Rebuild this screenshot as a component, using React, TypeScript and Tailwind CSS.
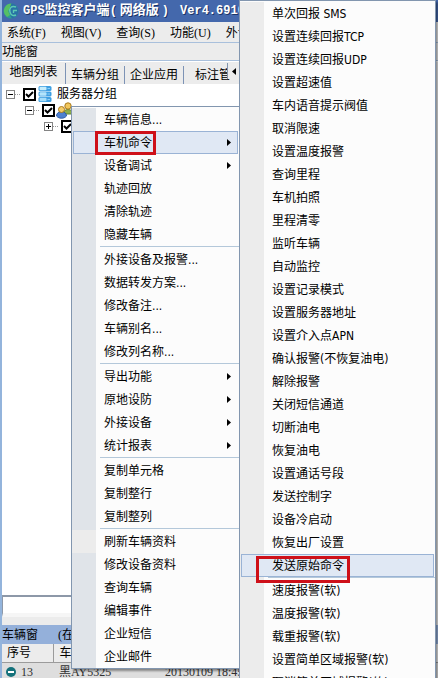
import { useState } from 'react';

type MenuEntry = {
  label: string;
  arrow?: boolean;
  active?: boolean;
  marked?: boolean;
  plain?: boolean;
};

const vehicleGroups: MenuEntry[][] = [
  [
    { label: '车辆信息...' },
    { label: '车机命令', arrow: true, active: true, marked: true },
    { label: '设备调试', arrow: true },
    { label: '轨迹回放' },
    { label: '清除轨迹' },
    { label: '隐藏车辆' },
  ],
  [
    { label: '外接设备及报警...' },
    { label: '数据转发方案...' },
    { label: '修改备注...' },
    { label: '车辆别名...' },
    { label: '修改列名称...' },
  ],
  [
    { label: '导出功能', arrow: true },
    { label: '原地设防', arrow: true },
    { label: '外接设备', arrow: true },
    { label: '统计报表', arrow: true },
  ],
  [{ label: '复制单元格' }, { label: '复制整行' }, { label: '复制整列' }],
  [
    { label: '刷新车辆资料', plain: true },
    { label: '修改设备资料' },
    { label: '查询车辆' },
    { label: '编辑事件' },
    { label: '企业短信' },
    { label: '企业邮件' },
  ],
];

const commandGroups: MenuEntry[][] = [
  [
    { label: '单次回报 SMS' },
    { label: '设置连续回报TCP' },
    { label: '设置连续回报UDP' },
    { label: '设置超速值' },
    { label: '车内语音提示阀值' },
    { label: '取消限速' },
    { label: '设置温度报警' },
    { label: '查询里程' },
    { label: '车机拍照' },
    { label: '里程清零' },
    { label: '监听车辆' },
    { label: '自动监控' },
    { label: '设置记录模式' },
    { label: '设置服务器地址' },
    { label: '设置介入点APN' },
    { label: '确认报警(不恢复油电)' },
    { label: '解除报警' },
    { label: '关闭短信通道' },
    { label: '切断油电' },
    { label: '恢复油电' },
    { label: '设置通话号段' },
    { label: '发送控制字' },
    { label: '设备冷启动' },
    { label: '恢复出厂设置' },
    { label: '发送原始命令', active: true, marked: true },
  ],
  [
    { label: '速度报警(软)' },
    { label: '温度报警(软)' },
    { label: '载重报警(软)' },
    { label: '设置简单区域报警(软)' },
    { label: '取消简单区域报警(软)' },
  ],
];

function MenuRow({ entry, command }: { entry: MenuEntry; command?: boolean }) {
  const strip = command || entry.plain ? 'bg-[#ececec]' : 'bg-[#e0e4e9]';
  return (
    <button
      type="button"
      role="menuitem"
      className={`relative flex h-[23px] w-full shrink-0 items-center text-left whitespace-nowrap ${entry.marked ? 'z-10' : ''}`}
    >
      <span className={`h-full w-6 shrink-0 ${strip}`} />
      {entry.active && <span className="absolute inset-x-px inset-y-0 border border-[#9ab3d5] bg-[#e0e8f4]" />}
      <span className="relative pl-2">{entry.label}</span>
      {entry.marked && (
        <span
          className={
            command
              ? 'absolute top-[2px] left-4 h-[27px] w-[94px] border-3 border-[#ce1019]'
              : 'absolute top-0 left-[23px] h-6 w-[61px] border-3 border-[#ce1019]'
          }
        />
      )}
      {entry.arrow && (
        <svg viewBox="0 0 4 7" className="relative mr-2 ml-auto h-[7px] w-1" aria-hidden="true">
          <path d="M0 0 L4 3.5 L0 7 Z" />
        </svg>
      )}
    </button>
  );
}

function Menu({ groups, command, label }: { groups: MenuEntry[][]; command?: boolean; label: string }) {
  return (
    <div
      role="menu"
      aria-label={label}
      className="flex flex-col border border-[#8296af] bg-[#fcfcfc] pt-px font-['DejaVu_Sans_Condensed','Noto_Sans_CJK_SC',sans-serif] text-[12px] leading-4 shadow-[2px_2px_2px_rgba(0,0,0,0.4)]"
    >
      {groups.map((group, index) => (
        <div key={index} role="group" className="flex flex-col">
          {index > 0 && (
            <div className="flex h-[2px]">
              <div className={command ? 'w-6 bg-[#ececec]' : 'w-6 bg-[#e0e4e9]'} />
              <div className="ml-1 h-px flex-1 bg-[#b4c8da]" />
            </div>
          )}
          {group.map((entry) => (
            <MenuRow key={entry.label} entry={entry} command={command} />
          ))}
        </div>
      ))}
    </div>
  );
}

function TreeCheck({ label }: { label: string }) {
  const [checked, setChecked] = useState(true);
  return (
    <span className="relative flex size-[13px] shrink-0">
      <input
        type="checkbox"
        aria-label={label}
        checked={checked}
        onChange={(e) => setChecked(e.target.checked)}
        className="size-[13px] appearance-none border-2 border-black bg-white"
      />
      {checked && (
        <svg viewBox="0 0 13 13" className="pointer-events-none absolute inset-0" aria-hidden="true">
          <path d="M3 6 L5.5 8.5 L10 4" fill="none" stroke="#000" strokeWidth="2" />
        </svg>
      )}
    </span>
  );
}

function Expander({ open }: { open?: boolean }) {
  return (
    <button type="button" aria-label={open ? '折叠' : '展开'} className="flex shrink-0">
      <svg viewBox="0 0 9 9" className="size-[9px]" shapeRendering="crispEdges">
        <rect x="0.5" y="0.5" width="8" height="8" fill="#fff" stroke="#848484" />
        <path d={open ? 'M2 4.5 H7' : 'M2 4.5 H7 M4.5 2 V7'} stroke="#000" />
      </svg>
    </button>
  );
}

function Dots() {
  return <span className="mr-[3px] w-[5px] shrink-0 border-t border-dotted border-[#9a9a9a]" />;
}

function ServerIcon() {
  return (
    <svg viewBox="0 0 16 16" className="size-4 shrink-0" aria-hidden="true">
      <rect x="1.5" y="0" width="13" height="5" rx="1.5" fill="#3f9fe2" />
      <rect x="1.5" y="5.5" width="13" height="5" rx="1.5" fill="#3f9fe2" />
      <rect x="1.5" y="11" width="13" height="5" rx="1.5" fill="#3f9fe2" />
      <rect x="2.5" y="0.7" width="7" height="3.5" rx="1" fill="#c4ecfc" />
      <rect x="2.5" y="6.2" width="7" height="3.5" rx="1" fill="#b3e4fb" />
      <rect x="2.5" y="11.7" width="7" height="3.5" rx="1" fill="#a4ddfa" />
      <path d="M10.5 2.5 H13 M10.5 8 H13 M10.5 13.5 H13" stroke="#8fd0f6" />
    </svg>
  );
}

function UsersIcon() {
  return (
    <svg viewBox="0 0 17 17" className="size-[17px] shrink-0" aria-hidden="true">
      <path d="M7 12 C7 6 17 6 17 12 Z" fill="#8fae4c" stroke="#5f8534" />
      <circle cx="12" cy="4" r="3.2" fill="#f1c65b" stroke="#a9791d" />
      <path d="M0.5 14 C0.5 8 10.5 8 10.5 14 C8 17 3 17 0.5 14 Z" fill="#4d80cf" stroke="#2e5ba6" />
      <circle cx="5.5" cy="7.5" r="3" fill="#f5cc68" stroke="#a9791d" />
    </svg>
  );
}

function LogoIcon() {
  return (
    <svg viewBox="0 0 16 16" className="size-4 shrink-0" aria-hidden="true">
      <circle cx="8" cy="8" r="7.5" fill="#2c9d91" />
      <path d="M8 0.5 A7.5 7.5 0 0 0 4 14 L7 12 L5 8 L8 4 Z" fill="#56bf64" />
      <path d="M9 0.6 A7.5 7.5 0 0 1 9 15.4 C6 13 6 3 9 0.6 Z" fill="#2872a4" />
      <path d="M13 4 C8 2 6 6 7 9 C8 13 11 13 13 12 M14 7.5 H10.5 V10" fill="none" stroke="#5cc9b4" strokeWidth="1.4" />
    </svg>
  );
}

const menuBar = ['系统(F)', '视图(V)', '查询(S)', '功能(U)', '外设'];
const tabs = ['地图列表', '车辆分组', '企业应用', '标注管'];

export default function App() {
  const [tab, setTab] = useState(tabs[0]);

  return (
    <main className="relative h-screen overflow-hidden bg-[#ececec] font-['Liberation_Serif','Noto_Sans_CJK_SC',serif] text-[12px] leading-4 text-black">
      <div className="flex h-full flex-col border-l-2 border-[#93b4dc]">
        <header className="flex h-[22px] shrink-0 items-center gap-1 bg-[#4468ac] pl-px text-white">
          <LogoIcon />
          <h1 className="flex gap-[3px] font-['Liberation_Mono','Noto_Sans_CJK_SC',monospace] font-bold whitespace-nowrap text-shadow-[1px_1px_0_#1c3468]">
            <span>
              GPS<span className="text-[13px]">监控客户端</span>(
            </span>
            <span className="text-[13px]">网络版</span>
            <span>)</span>
            <span className="pl-2">Ver4.6910</span>
          </h1>
        </header>
        <nav className="flex h-5 shrink-0 items-center gap-[15px] overflow-hidden pt-px pl-[5px] whitespace-nowrap">
          {menuBar.map((item) => (
            <button key={item} type="button">
              {item}
            </button>
          ))}
        </nav>
        <h2 className="h-[19px] shrink-0 border-y border-[#a9c0dc] leading-[18px]">功能窗</h2>
        <div className="flex h-[23px] shrink-0 items-end border-t border-white pt-px whitespace-nowrap" role="tablist">
          {tabs.map((item) => (
            <button
              key={item}
              type="button"
              role="tab"
              aria-selected={tab === item}
              onClick={() => setTab(item)}
              className={`shrink-0 border-r border-[#7d93b5] ${tab === item ? 'h-[21px] w-16 pb-1' : 'h-[18px] w-[59px] pb-px'}`}
            >
              {item}
            </button>
          ))}
        </div>
        <section className="flex max-w-[238px] flex-1 flex-col bg-white pt-[2px]">
          <div className="flex h-4 items-center pl-1">
            <Expander open />
            <Dots />
            <TreeCheck label="服务器分组" />
            <span className="mr-1 ml-px flex">
              <ServerIcon />
            </span>
            服务器分组
          </div>
          <div className="flex h-4 items-center pl-[23px]">
            <Expander open />
            <Dots />
            <TreeCheck label="分组" />
            <span className="ml-px flex">
              <UsersIcon />
            </span>
          </div>
          <div className="flex h-4 items-center pl-[42px]">
            <Expander />
            <Dots />
            <TreeCheck label="车辆" />
          </div>
        </section>
        <div className="h-[22px] max-w-[238px] shrink-0 border-t-2 border-b-4 border-l border-t-[#8d98a8] border-b-[#f6f6f6] border-l-[#8d98a8] bg-white" />
        <div className="h-2 shrink-0" />
        <h2 className="flex h-[19px] shrink-0 items-center gap-5 bg-[#94b0da]">
          <span>车辆窗</span>
          <span>(在线)</span>
        </h2>
        <table className="-mb-1 w-full shrink-0 table-fixed border-collapse text-left">
          <thead>
            <tr className="h-[18px] border-b border-[#9b9b9b]">
              <th className="w-[51px] border-r border-[#9b9b9b] p-0 pl-[5px] font-normal">序号</th>
              <th className="w-28 p-0 pl-[6px] font-normal">车牌</th>
              <th className="p-0 font-normal">时间</th>
            </tr>
          </thead>
          <tbody>
            <tr className="h-5 bg-[#dedede] text-[#303030]">
              <td className="p-0 pl-1">
                <span className="flex items-center gap-[5px]">
                  <svg viewBox="0 0 10 10" className="size-[10px]" aria-hidden="true">
                    <circle cx="5" cy="5" r="5" fill="#13717a" />
                    <path d="M2 5 H8" stroke="#fff" strokeWidth="2" />
                  </svg>
                  13
                </span>
              </td>
              <td className="p-0 pl-[6px]">黑AY5325</td>
              <td className="p-0">20130109 18:45</td>
            </tr>
          </tbody>
        </table>
      </div>

      <button
        type="button"
        aria-label="向左滚动"
        className="absolute top-[63px] left-[227px] flex h-4 w-3 items-center justify-center border-l border-[#8296af] bg-[#ececec]"
      >
        <svg viewBox="0 0 4 7" className="h-[7px] w-1" aria-hidden="true">
          <path d="M4 0 L0 3.5 L4 7 Z" />
        </svg>
      </button>

      <div className="absolute top-[106px] left-[71px] w-[169px]">
        <Menu groups={vehicleGroups} label="车辆菜单" />
      </div>
      <div className="absolute top-0 left-[239px] w-[197px]">
        <Menu groups={commandGroups} command label="车机命令" />
      </div>
    </main>
  );
}
